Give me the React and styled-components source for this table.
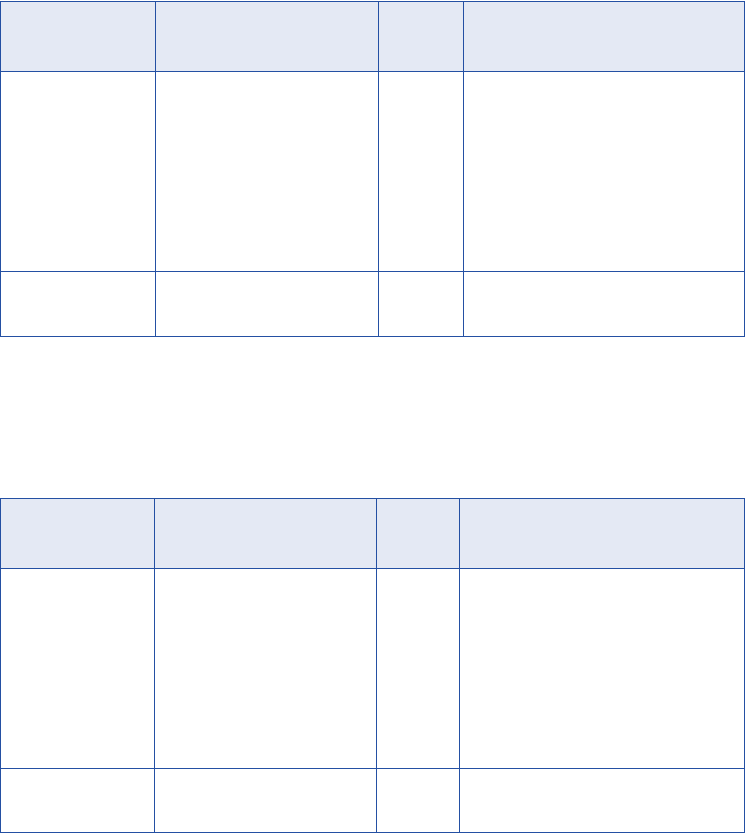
import React from 'react';
import styled, { createGlobalStyle } from 'styled-components';

const GlobalStyle = createGlobalStyle`
  html, body {
    margin: 0;
    padding: 0;
    background: #ffffff;
    font-family: "Liberation Sans", Arial, sans-serif;
  }
`;

const Page = styled.div`
  width: 745px;
  padding-top: 1px;
  display: flex;
  flex-direction: column;
  gap: ${(p) => p.gap}px;
`;

const Table = styled.table`
  width: 744px;
  border-collapse: collapse;
  table-layout: fixed;
`;

const HeadCell = styled.th`
  height: ${(p) => p.h}px;
  padding: 0;
  background: #e4e9f4;
  border: 1px solid #2450a3;
  box-sizing: border-box;
`;

const Cell = styled.td`
  height: ${(p) => p.h}px;
  padding: 0;
  background: #ffffff;
  border: 1px solid #2450a3;
  box-sizing: border-box;
`;

const tables = [
  { cols: [155, 223, 85, 281], rows: [200, 65] },
  { cols: [154, 222, 83, 285], rows: [200, 64] },
];

function EmptyTable({ cols, rows }) {
  return (
    <Table>
      <colgroup>
        {cols.map((w, i) => (
          <col key={i} style={{ width: w }} />
        ))}
      </colgroup>
      <thead>
        <tr>
          {cols.map((_, i) => (
            <HeadCell key={i} h={70}></HeadCell>
          ))}
        </tr>
      </thead>
      <tbody>
        {rows.map((h, r) => (
          <tr key={r}>
            {cols.map((_, i) => (
              <Cell key={i} h={h}></Cell>
            ))}
          </tr>
        ))}
      </tbody>
    </Table>
  );
}

export default function App() {
  return (
    <>
      <GlobalStyle />
      <Page gap={161}>
        {tables.map((t, i) => (
          <EmptyTable key={i} cols={t.cols} rows={t.rows} />
        ))}
      </Page>
    </>
  );
}
